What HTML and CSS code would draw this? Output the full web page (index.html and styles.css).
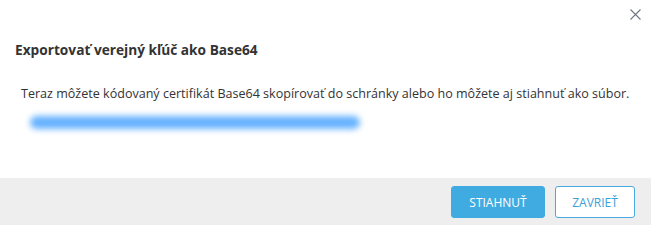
FILE: index.html
```html
<!DOCTYPE html>
<html lang="sk">
<head>
<meta charset="utf-8">
<link rel="stylesheet" href="styles.css">
</head>
<body>
<div class="dialog">
  <div class="top">
    <button class="close" aria-label="Zavrieť">
      <svg width="11" height="11" viewBox="0 0 11 11"><path d="M0.5 0.5 L10.5 10.5 M10.5 0.5 L0.5 10.5" stroke="#6f7785" stroke-width="1.1" fill="none"/></svg>
    </button>
  </div>
  <h1 class="title">Exportovať verejný kľúč ako Base64</h1>
  <p class="text">Teraz môžete kódovaný certifikát Base64 skopírovať do schránky alebo ho môžete aj stiahnuť ako súbor.</p>
  <div class="keywrap"><div class="key"></div></div>
  <div class="footer">
    <button class="btn primary">STIAHNUŤ</button>
    <button class="btn secondary">ZAVRIEŤ</button>
  </div>
</div>
</body>
</html>
```
FILE: styles.css
```css
html, body {
  margin: 0;
  padding: 0;
  background: #ffffff;
}
.dialog {
  width: 651px;
  height: 225px;
  display: flex;
  flex-direction: column;
  font-family: "Open Sans", "Noto Sans", sans-serif;
  color: #333333;
}
.top {
  height: 30px;
  display: flex;
  justify-content: flex-end;
  align-items: flex-start;
}
.close {
  border: 0;
  background: transparent;
  padding: 0;
  margin: 9px 10px 0 0;
  width: 11px;
  height: 11px;
  display: flex;
}
.title {
  margin: 11px 0 0 15px;
  font-size: 13.7px;
  font-weight: 700;
  line-height: 18px;
  color: #333333;
}
.text {
  margin: 27px 0 0 21px;
  font-size: 12.55px;
  line-height: 16px;
  color: #333333;
}
.keywrap {
  margin: 14px 0 0 30px;
  height: 14px;
}
.key {
  width: 330px;
  height: 13px;
  border-radius: 7px;
  background: #66b2ff;
  filter: blur(3px);
}
.footer {
  margin-top: auto;
  height: 47px;
  background: #eeeeee;
  display: flex;
  justify-content: flex-end;
  align-items: flex-start;
  gap: 10px;
  padding: 8px 16px 0 0;
  box-sizing: border-box;
}
.btn {
  height: 32px;
  font-family: "Open Sans", "Noto Sans", sans-serif;
  font-size: 12px;
  border-radius: 3px;
  padding: 0;
}
.primary {
  width: 94px;
  background: #40abe1;
  border: 1px solid #40abe1;
  color: #ffffff;
}
.secondary {
  width: 80px;
  background: #ffffff;
  border: 1px solid #4aa9df;
  color: #3aa0da;
}
```
